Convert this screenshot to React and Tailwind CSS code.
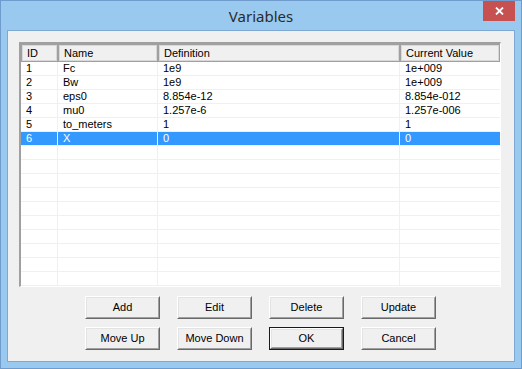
const rows = [
  { id: '1', name: 'Fc', def: '1e9', value: '1e+009' },
  { id: '2', name: 'Bw', def: '1e9', value: '1e+009' },
  { id: '3', name: 'eps0', def: '8.854e-12', value: '8.854e-012' },
  { id: '4', name: 'mu0', def: '1.257e-6', value: '1.257e-006' },
  { id: '5', name: 'to_meters', def: '1', value: '1' },
  { id: '6', name: 'X', def: '0', value: '0', selected: true },
]

// pad to 16 visible lines
const lines = [...rows, ...Array.from({ length: 10 }, () => null)]

const cols = ['w-[37px]', 'w-[100px]', 'w-[242px]', 'w-[100px]']

function Button({ label, isDefault }) {
  const face = (
    <div className="w-full h-full border border-t-white border-l-white border-r-[#696969] border-b-[#696969]">
      <div className="w-full h-full border border-t-[#e3e3e3] border-l-[#e3e3e3] border-r-[#a0a0a0] border-b-[#a0a0a0] bg-[#f0f0f0] flex items-center justify-center text-[11px] text-black">
        {label}
      </div>
    </div>
  )
  return (
    <div className={`w-[75px] h-[23px] ${isDefault ? 'border border-[#1a1a1a]' : ''}`}>
      {face}
    </div>
  )
}

function HeaderCell({ width, children }) {
  return (
    <div className={`${width} h-[18px] border border-[#a0a0a0] outline outline-1 -outline-offset-2 outline-[#d8d8d8] bg-[#f0f0f0] flex items-center pl-[5px] text-[11px] text-black`}>
      {children}
    </div>
  )
}

export default function App() {
  return (
    <div
      className="w-[522px] h-[369px] border border-[#6f9ccc] bg-[#99c9ef] flex flex-col"
      style={{ fontFamily: '"Liberation Sans", Arial, sans-serif' }}
    >
      {/* title bar */}
      <div className="relative h-[29px] flex items-center justify-center">
        <span className="text-[15px] text-[#2b2b2b] pt-[2px]" style={{ fontFamily: '"Noto Sans", "Open Sans", sans-serif' }}>
          Variables
        </span>
        <div className="absolute right-[6px] top-0 w-[32px] h-[20px] bg-[#c75050] flex items-center justify-center">
          <svg width="9" height="8" viewBox="0 0 9 8">
            <path d="M1 0.5 L8 7.5 M8 0.5 L1 7.5" stroke="white" strokeWidth="1.8" />
          </svg>
        </div>
      </div>

      {/* client area */}
      <div className="mx-[6px] flex-1 mb-[6px] border border-[#7fa9d3] bg-[#f0f0f0] flex flex-col">
        <div className="pl-[11px] pt-[11px]">
          <div className="w-[482px] border-t-2 border-l-2 border-t-[#a0a0a0] border-l-[#a0a0a0] border-r border-b border-r-white border-b-white">
            <div className="bg-white">
              <div className="flex">
                <HeaderCell width={cols[0]}>ID</HeaderCell>
                <HeaderCell width={cols[1]}>Name</HeaderCell>
                <HeaderCell width={cols[2]}>Definition</HeaderCell>
                <HeaderCell width={cols[3]}>Current Value</HeaderCell>
              </div>
              {lines.map((r, i) => (
                <div
                  key={i}
                  className={`flex h-[14px] border-b border-[#f0f0f0] text-[11px] ${r && r.selected ? 'bg-[#3399ff] text-white' : 'text-black'}`}
                >
                  {[r?.id, r?.name, r?.def, r?.value].map((t, j) => (
                    <div
                      key={j}
                      className={`${cols[j]} h-[13px] leading-[13px] pl-[5px] ${j < 3 ? 'border-r border-[#f0f0f0]' : ''} ${j === 0 ? 'pl-[3px]' : ''}`}
                    >
                      {t || ''}
                    </div>
                  ))}
                </div>
              ))}
            </div>
          </div>
        </div>

        {/* buttons */}
        <div className="flex flex-col items-center gap-[8px] mt-[9px] pr-[1px]">
          <div className="flex gap-[17px]">
            <Button label="Add" />
            <Button label="Edit" />
            <Button label="Delete" />
            <Button label="Update" />
          </div>
          <div className="flex gap-[17px]">
            <Button label="Move Up" />
            <Button label="Move Down" />
            <Button label="OK" isDefault />
            <Button label="Cancel" />
          </div>
        </div>
      </div>
    </div>
  )
}
